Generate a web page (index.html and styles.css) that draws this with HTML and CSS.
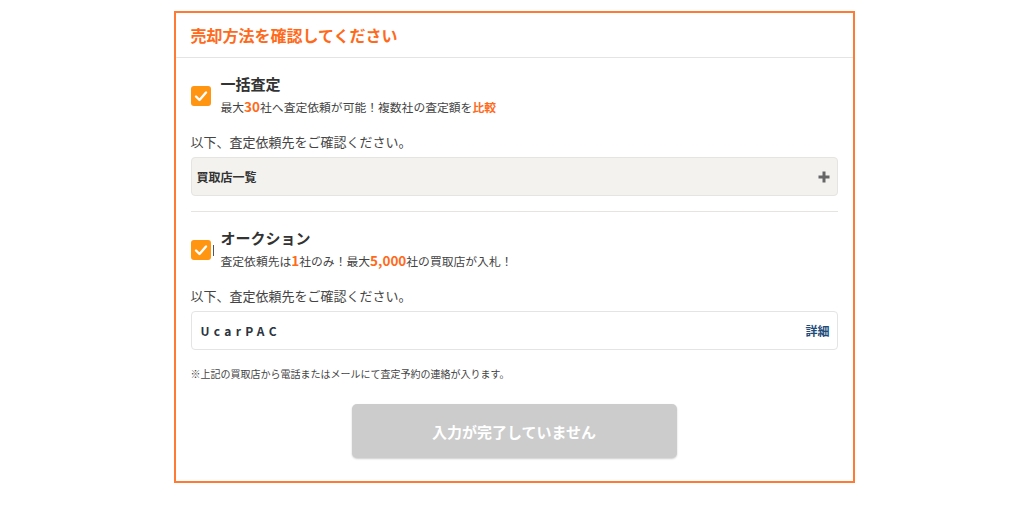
FILE: index.html
```html
<!DOCTYPE html>
<html lang="ja">
<head>
<meta charset="utf-8">
<title>売却方法を確認してください</title>
<link rel="stylesheet" href="styles.css">
</head>
<body>
<div class="card">
  <div class="card-head">
    <h1 class="card-title">売却方法を確認してください</h1>
  </div>
  <div class="card-body">
    <div class="option">
      <span class="check">
        <svg viewBox="0 0 20 20" width="20" height="20"><path d="M5 10.5 L8.5 14 L15 6.5" fill="none" stroke="#fff" stroke-width="2.4" stroke-linecap="round" stroke-linejoin="round"/></svg>
      </span>
      <div class="option-text">
        <div class="option-title">一括査定</div>
        <div class="option-sub">最大<b class="num">30</b>社へ査定依頼が可能！複数社の査定額を<b class="hl">比較</b></div>
      </div>
    </div>
    <p class="lead">以下、査定依頼先をご確認ください。</p>
    <div class="box box-gray">
      <span class="box-label">買取店一覧</span>
      <svg class="plus" viewBox="0 0 12 12" width="12" height="12"><path d="M6 0.5 V11.5 M0.5 6 H11.5" stroke="#666" stroke-width="3"/></svg>
    </div>
    <hr class="divider">
    <div class="option">
      <span class="check check-mark">
        <svg viewBox="0 0 20 20" width="20" height="20"><path d="M5 10.5 L8.5 14 L15 6.5" fill="none" stroke="#fff" stroke-width="2.4" stroke-linecap="round" stroke-linejoin="round"/></svg>
      </span>
      <div class="option-text">
        <div class="option-title">オークション</div>
        <div class="option-sub">査定依頼先は<b class="num">1</b>社のみ！最大<b class="num">5,000</b>社の買取店が入札！</div>
      </div>
    </div>
    <p class="lead">以下、査定依頼先をご確認ください。</p>
    <div class="box box-white">
      <span class="brand">UcarPAC</span>
      <span class="detail">詳細</span>
    </div>
    <p class="note">※上記の買取店から電話またはメールにて査定予約の連絡が入ります。</p>
    <div class="actions">
      <button class="submit" type="button">入力が完了していません</button>
    </div>
  </div>
</div>
</body>
</html>
```

FILE: styles.css
```css
* { box-sizing: border-box; }
html, body { margin: 0; padding: 0; background: #fff; }
body {
  font-family: "Noto Sans CJK JP", "Noto Sans", "Liberation Sans", sans-serif;
  color: #333;
  padding-left: 4px;
}
.card {
  width: 681px;
  margin: 11px auto 0;
  border: 2px solid #ff7a33;
  background: #fff;
}
.card-head {
  height: 45px;
  display: flex;
  align-items: center;
  padding: 0 15px;
  border-bottom: 1px solid #e4e4e4;
}
.card-title {
  margin: 0;
  font-size: 16px;
  font-weight: 700;
  color: #ff6a1a;
  line-height: 1;
}
.card-body {
  padding: 15px 15px 23px;
}
.option {
  display: flex;
  align-items: center;
  gap: 10px;
}
.check {
  position: relative;
  width: 20px;
  height: 20px;
  border-radius: 3px;
  background: #ff9511;
  display: flex;
  flex: none;
  margin-top: 1px;
}
.check-mark::after {
  content: "";
  position: absolute;
  right: -3px;
  top: 5px;
  width: 1px;
  height: 11px;
  background: #555;
}
.option-title {
  font-size: 15px;
  font-weight: 700;
  line-height: 22px;
  color: #333;
}
.option-sub {
  font-size: 11.8px;
  line-height: 22px;
  color: #444;
}
.option-sub .num {
  font-size: 13.5px;
  font-weight: 700;
  color: #ff6a1a;
}
.option-sub .hl {
  font-weight: 700;
  color: #ff6a1a;
}
.lead {
  margin: 14px 0 0;
  font-size: 13px;
  line-height: 20px;
  color: #444;
}
.box {
  margin-top: 5px;
  height: 39px;
  border-radius: 4px;
  display: flex;
  align-items: center;
  justify-content: space-between;
}
.box-gray {
  background: #f3f2ef;
  border: 1px solid #e6e4e0;
  padding: 0 7px 0 5px;
}
.box-label {
  font-size: 12px;
  font-weight: 700;
  color: #333;
}
.plus { display: block; }
.divider {
  margin: 15px 0 0;
  border: 0;
  border-top: 1px solid #e6e4e0;
  height: 0;
}
.divider + .option { margin-top: 15px; }
.box-white {
  background: #fff;
  border: 1px solid #e4e4e4;
  padding: 0 7px 0 9px;
}
.brand {
  font-size: 12px;
  font-weight: 700;
  letter-spacing: 4.3px;
  color: #2b3440;
}
.detail {
  font-size: 12px;
  font-weight: 700;
  color: #1d4c7a;
}
.note {
  margin: 15px 0 0;
  font-size: 10px;
  line-height: 18px;
  color: #444;
}
.actions {
  margin-top: 21px;
  display: flex;
  justify-content: center;
}
.submit {
  width: 325px;
  height: 54px;
  border: 0;
  border-radius: 5px;
  background: #cccccc;
  color: #fff;
  font-family: inherit;
  font-size: 15px;
  font-weight: 700;
  box-shadow: 0 1px 2px rgba(0,0,0,0.2);
}
```
